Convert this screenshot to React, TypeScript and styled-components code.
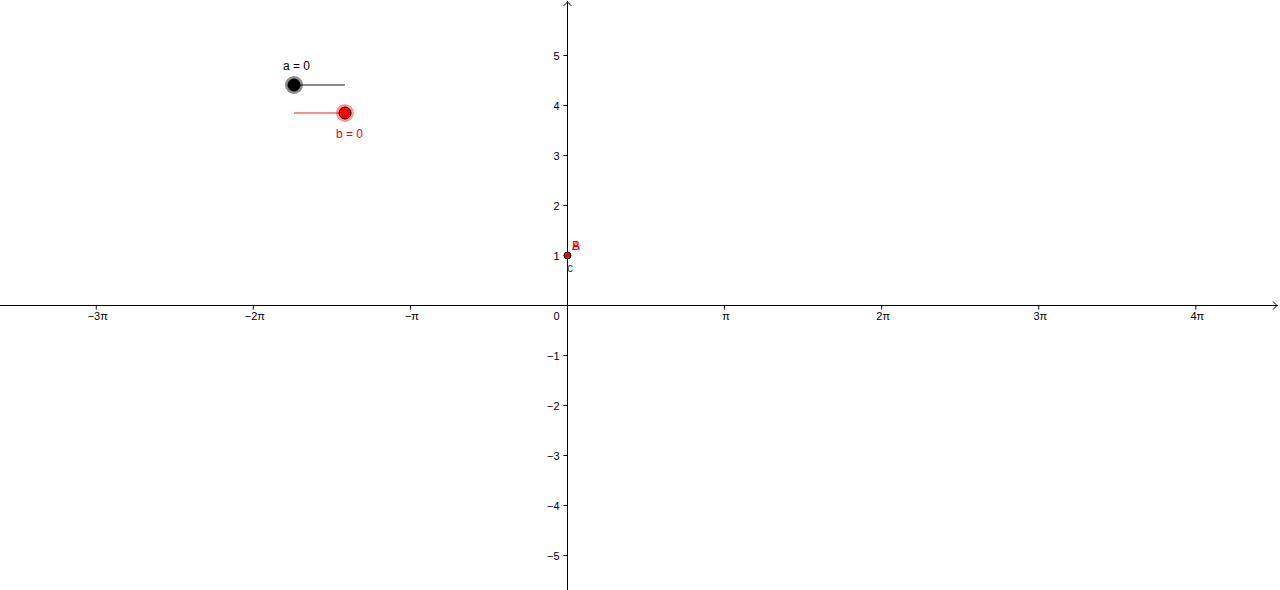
import styled, { createGlobalStyle } from "styled-components";

const GlobalStyle = createGlobalStyle`
	html, body {
		margin: 0;
		padding: 0;
		background: #ffffff;
		overflow: hidden;
	}
`;

const WIDTH = 1280;
const HEIGHT = 590;
const ORIGIN_X = 567.5;
const ORIGIN_Y = 305.5;
const UNIT = 50;

const Canvas = styled.div`
	width: ${WIDTH}px;
	height: ${HEIGHT}px;
	background: #ffffff;
`;

const Graph = styled.svg`
	display: block;
	font-family: "Liberation Sans", Arial, sans-serif;
`;

const AxisLine = styled.line`
	stroke: #000000;
	stroke-width: 1;
`;

const Arrow = styled.polyline`
	fill: none;
	stroke: #000000;
	stroke-width: 1;
`;

const Tick = styled.line`
	stroke: #000000;
	stroke-width: 1;
`;

const TickLabel = styled.text<{ $anchor?: string }>`
	font-size: 11px;
	fill: #000000;
	text-anchor: ${(p) => p.$anchor || "middle"};
`;

const Track = styled.line<{ $color: string }>`
	stroke: ${(p) => p.$color};
	stroke-width: 2;
`;

const Halo = styled.circle<{ $color: string }>`
	fill: ${(p) => p.$color};
`;

const Knob = styled.circle<{ $color: string }>`
	fill: ${(p) => p.$color};
	stroke: #000000;
	stroke-width: 1;
`;

const Label = styled.text<{ $color: string }>`
	font-size: 12px;
	fill: ${(p) => p.$color};
`;

const xTicks = [
	{ n: -3, text: "\u22123\u03c0" },
	{ n: -2, text: "\u22122\u03c0" },
	{ n: -1, text: "\u2212\u03c0" },
	{ n: 1, text: "\u03c0" },
	{ n: 2, text: "2\u03c0" },
	{ n: 3, text: "3\u03c0" },
	{ n: 4, text: "4\u03c0" },
];

const yTicks = [5, 4, 3, 2, 1, -1, -2, -3, -4, -5];

type SliderProps = {
	x1: number;
	x2: number;
	y: number;
	knobX: number;
	track: string;
	halo: string;
	fill: string;
	label: string;
	labelX: number;
	labelY: number;
	labelColor: string;
};

const Slider = ({ x1, x2, y, knobX, track, halo, fill, label, labelX, labelY, labelColor }: SliderProps) => (
	<g>
		<Track x1={x1} y1={y} x2={x2} y2={y} $color={track} />
		<Halo cx={knobX} cy={y} r={9} $color={halo} />
		<Knob cx={knobX} cy={y} r={6} $color={fill} />
		<Label x={labelX} y={labelY} $color={labelColor}>
			{label}
		</Label>
	</g>
);

export default function App() {
	const px = (n: number) => ORIGIN_X + n * Math.PI * UNIT;
	const py = (n: number) => ORIGIN_Y - n * UNIT;

	return (
		<Canvas>
			<GlobalStyle />
			<Graph width={WIDTH} height={HEIGHT} viewBox={`0 0 ${WIDTH} ${HEIGHT}`}>
				<AxisLine x1={0} y1={ORIGIN_Y} x2={1278} y2={ORIGIN_Y} />
				<Arrow points={`1273,${ORIGIN_Y - 4} 1277,${ORIGIN_Y} 1273,${ORIGIN_Y + 4}`} />
				<AxisLine x1={ORIGIN_X} y1={1} x2={ORIGIN_X} y2={HEIGHT} />
				<Arrow points={`${ORIGIN_X - 4},6 ${ORIGIN_X},2 ${ORIGIN_X + 4},6`} />

				{xTicks.map((t) => (
					<g key={t.n}>
						<Tick x1={px(t.n)} y1={ORIGIN_Y} x2={px(t.n)} y2={ORIGIN_Y + 4} />
						<TickLabel x={px(t.n) + 1.5} y={ORIGIN_Y + 14}>
							{t.text}
						</TickLabel>
					</g>
				))}

				{yTicks.map((n) => (
					<g key={n}>
						<Tick x1={ORIGIN_X - 4} y1={py(n)} x2={ORIGIN_X} y2={py(n)} />
						<TickLabel x={ORIGIN_X - 8} y={py(n) + 4} $anchor="end">
							{n < 0 ? `\u2212${-n}` : n}
						</TickLabel>
					</g>
				))}

				<TickLabel x={ORIGIN_X - 8} y={ORIGIN_Y + 14} $anchor="end">
					0
				</TickLabel>

				<Slider
					x1={294}
					x2={345}
					y={85}
					knobX={294}
					track="#8a8a8a"
					halo="rgba(0, 0, 0, 0.45)"
					fill="#000000"
					label="a = 0"
					labelX={283}
					labelY={70}
					labelColor="#000000"
				/>
				<Slider
					x1={294}
					x2={345}
					y={113}
					knobX={345}
					track="#ff8c8c"
					halo="rgba(255, 0, 0, 0.4)"
					fill="#ff0000"
					label="b = 0"
					labelX={336}
					labelY={138}
					labelColor="#ff0000"
				/>

				<Knob cx={ORIGIN_X} cy={py(1)} r={3.5} $color="#ff0000" />
				<Label x={572} y={250} $color="#ff0000">
					A
				</Label>
				<Label x={572} y={250} $color="#ff0000">
					B
				</Label>
				<Label x={567} y={272} $color="#404040">
					c
				</Label>
			</Graph>
		</Canvas>
	);
}
